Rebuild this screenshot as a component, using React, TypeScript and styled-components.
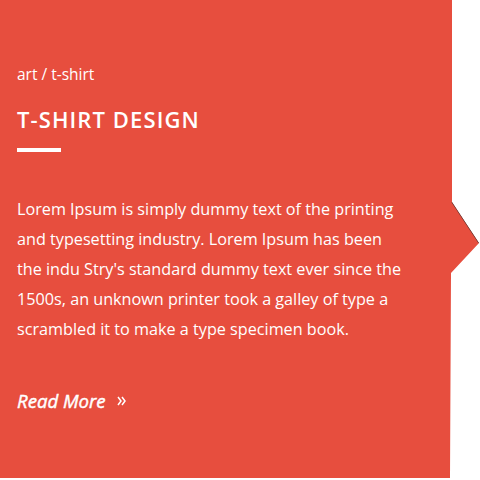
import * as React from 'react';
import styled, { createGlobalStyle } from 'styled-components'

const GlobalStyle = createGlobalStyle`
html, body {
  margin: 0;
  padding: 0;
  background: #ffffff;
}
body {
  font-family: "Open Sans", "Liberation Sans", sans-serif;
}
`

const Card = styled.div`
position: relative;
width: 480px;
height: 478px;
background: #e74e3e;
clip-path: polygon(0 0, 452px 0, 452px 202px, 479px 243px, 451px 273px, 450px 478px, 0 478px);
box-sizing: border-box;
padding: 64px 0 0 17px;
color: #ffffff;
`

const Edge = styled.svg`
position: absolute;
left: 451px;
top: 201px;
`

const Crumb = styled.div`
font-size: 15.5px;
line-height: 20px;
`

const Title = styled.h2`
margin: 20px 0 0;
font-size: 22px;
font-weight: 600;
letter-spacing: 1.1px;
line-height: 30px;
`

const Bar = styled.div`
width: 44px;
height: 4px;
background: #ffffff;
margin-top: 14px;
`

const Text = styled.p`
margin: 42px 0 0;
width: 388px;
font-size: 16.2px;
line-height: 30px;
`

const ReadMore = styled.a`
display: inline-flex;
align-items: center;
gap: 11px;
margin-top: 44px;
font-size: 18.6px;
font-weight: 400;
font-style: italic;
-webkit-text-stroke: 0.45px #ffffff;
color: #ffffff;
text-decoration: none;
`

const App: React.FC = () => {
    return(
<>
<GlobalStyle />
<Card>
    <Crumb>art / t-shirt</Crumb>
    <Title>T-SHIRT DESIGN</Title>
    <Bar />
    <Text>
        Lorem Ipsum is simply dummy text of the printing and typesetting industry. Lorem Ipsum has been the indu Stry's standard dummy text ever since the 1500s, an unknown printer took a galley of type a scrambled it to make a type specimen book.
    </Text>
    <ReadMore href="#">
        Read More
        <svg width="9" height="10" viewBox="0 0 9 10" fill="none" stroke="#fff" strokeWidth="1.5">
            <path d="M1 1 L4 5 L1 9" />
            <path d="M5 1 L8 5 L5 9" />
        </svg>
    </ReadMore>
    <Edge width="30" height="44" viewBox="0 0 30 44">
        <path d="M1 1 L28 42" stroke="rgba(40,40,40,0.8)" strokeWidth="1.2" />
    </Edge>
</Card>
</>
    )
}

export default App
